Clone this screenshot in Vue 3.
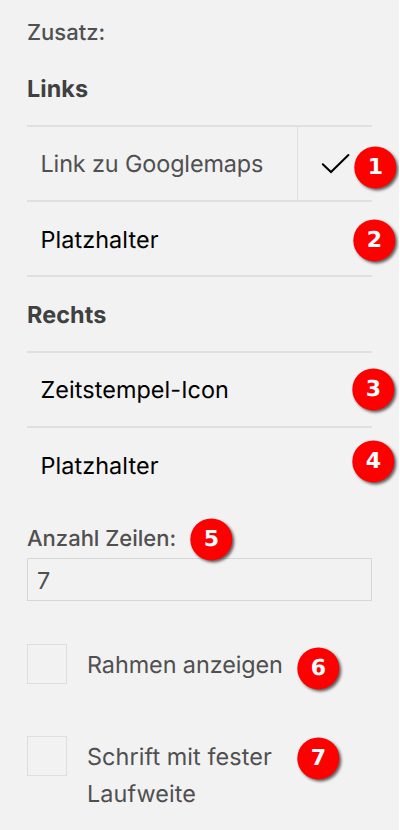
<script setup>
import { ref } from 'vue'

const rows = ref(7)
const options = [
  { id: 'frame', text: 'Rahmen anzeigen' },
  { id: 'mono', text: 'Schrift mit fester Laufweite' },
]
const markers = [
  { n: 1, x: 375, y: 167 },
  { n: 2, x: 374, y: 240 },
  { n: 3, x: 373, y: 389 },
  { n: 4, x: 373, y: 461 },
  { n: 5, x: 211, y: 539 },
  { n: 6, x: 318, y: 668 },
  { n: 7, x: 318, y: 758 },
]
</script>

<template>
  <main class="panel">
    <div class="label">Zusatz:</div>
    <h2 class="heading">Links</h2>
    <div class="list closed">
      <div class="row active">
        <span class="name">Link zu Googlemaps</span>
        <span class="check">
          <svg width="30" height="22" viewBox="0 0 30 22">
            <path d="M1.8 11.2 L10 19 L27.4 2" fill="none" stroke="#000" stroke-width="2" stroke-linecap="round" />
          </svg>
        </span>
      </div>
      <div class="row low"><span class="name">Platzhalter</span></div>
    </div>
    <h2 class="heading right">Rechts</h2>
    <div class="list">
      <div class="row"><span class="name">Zeitstempel-Icon</span></div>
      <div class="row low"><span class="name">Platzhalter</span></div>
    </div>
    <label class="label count" for="rows">Anzahl Zeilen:</label>
    <input id="rows" v-model="rows" class="field" type="text" />
    <label v-for="o in options" :key="o.id" class="option" :class="o.id">
      <input class="box" type="checkbox" />
      <span class="caption">{{ o.text }}</span>
    </label>
    <span
      v-for="m in markers"
      :key="m.n"
      class="marker"
      :style="{ left: m.x - 21 + 'px', top: m.y - 21 + 'px' }"
    >{{ m.n }}</span>
  </main>
</template>

<style>
body {
  background: #fff;
}
</style>

<style scoped>
.panel {
  position: relative;
  box-sizing: border-box;
  width: 399px;
  height: 830px;
  padding: 14px 27px 0;
  overflow: hidden;
  background: #f2f2f2;
  color: #505050;
  font-family: Inter, sans-serif;
  font-size: 23.4px;
  letter-spacing: 0.08px;
  text-rendering: geometricPrecision;
}
.label {
  display: block;
  box-sizing: border-box;
  height: 36px;
  padding-top: 1px;
  line-height: 36px;
  font-size: 22px;
  font-weight: 500;
  letter-spacing: 0;
}
.heading {
  box-sizing: border-box;
  height: 75px;
  margin: 0;
  padding-top: 2px;
  line-height: 73px;
  font-size: 23.4px;
  font-weight: 700;
  color: #404040;
}
.heading.right {
  height: 74px;
  padding-top: 1px;
}
.list.closed {
  border-bottom: 2px solid #e0e0e0;
}
.row {
  box-sizing: border-box;
  display: flex;
  height: 75px;
  border-top: 2px solid #e0e0e0;
  line-height: 73px;
  color: #000;
}
.row.active {
  color: #505050;
  letter-spacing: -0.12px;
}
.row.low {
  padding-top: 2px;
  line-height: 71px;
}
.name {
  flex: 1;
  padding-left: 13.5px;
}
.check {
  box-sizing: border-box;
  display: flex;
  align-items: center;
  width: 75px;
  padding-left: 23px;
  border-left: 1px solid #e0e0e0;
}
.count {
  margin-top: 19px;
}
.field {
  display: block;
  box-sizing: border-box;
  width: 345px;
  height: 43px;
  margin: 2px 0 43px;
  padding: 2px 9px 0;
  border: 1px solid #d6d6d6;
  border-radius: 0;
  outline: none;
  background: transparent;
  color: #505050;
  font: inherit;
}
.option {
  display: flex;
  gap: 20px;
  min-height: 40px;
  margin-bottom: 52px;
}
.option.frame {
  letter-spacing: -0.08px;
}
.box {
  flex: none;
  box-sizing: border-box;
  width: 40px;
  height: 40px;
  margin: 0;
  border: 1px solid #dedede;
  appearance: none;
}
.caption {
  width: 200px;
  padding-top: 2px;
  line-height: 37px;
}
.marker {
  position: absolute;
  width: 42px;
  height: 42px;
  border-radius: 50%;
  background: #f00;
  box-shadow: 2px 2px 3px rgba(0, 0, 0, 0.6);
  color: #fff;
  font: bold 22px/44px "DejaVu Sans", sans-serif;
  letter-spacing: 0;
  text-align: center;
  transform: translate(0.3px, 0.4px);
}
</style>
